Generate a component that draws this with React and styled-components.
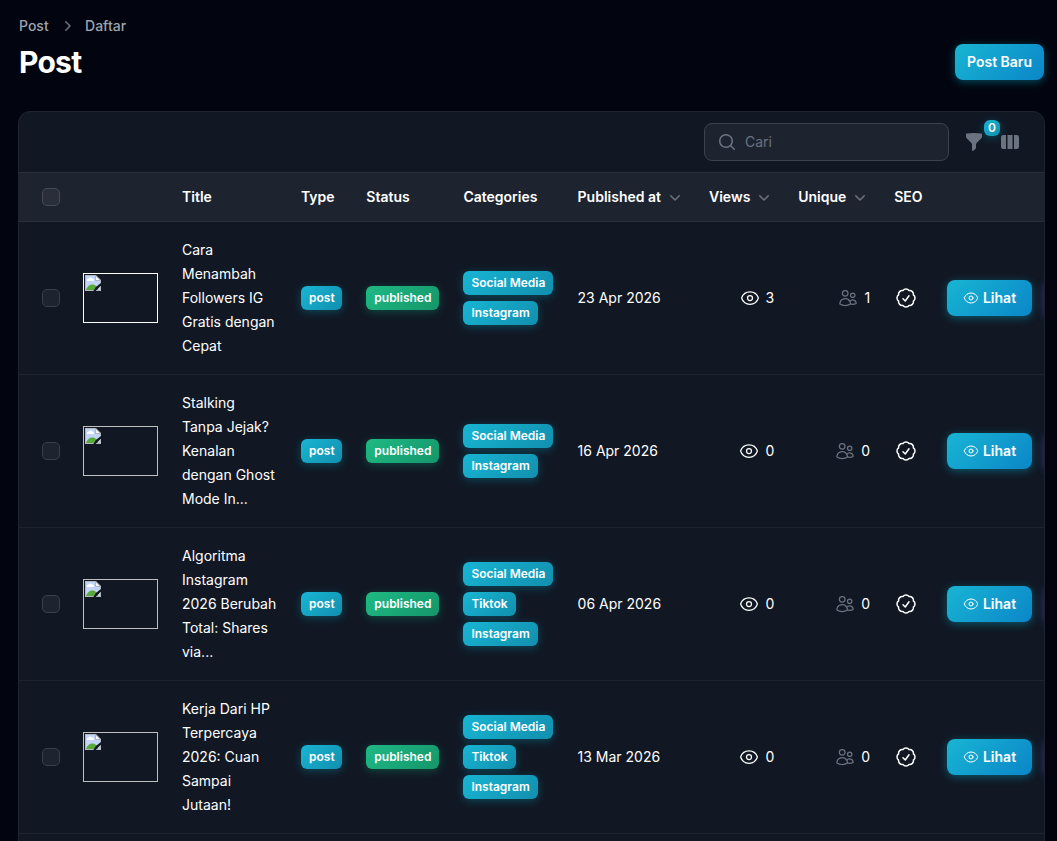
import React from "react";
import styled, { createGlobalStyle } from "styled-components";
import {
  HiMiniChevronDown,
  HiMiniChevronRight,
  HiMiniFunnel,
  HiMiniMagnifyingGlass,
  HiMiniViewColumns,
  HiOutlineCheckBadge,
  HiOutlineEye,
  HiOutlineUsers,
} from "react-icons/hi2";

const COLUMNS =
  "52px 99px 119px 65.3px 97.1px 114.2px 131.4px 89.25px 95.95px 52.8px 109px 100px";

const posts = [
  {
    title: "Cara Menambah Followers IG Gratis dengan Cepat",
    categories: ["Social Media", "Instagram"],
    date: "23 Apr 2026",
    views: 3,
    unique: 1,
    visited: true,
  },
  {
    title: "Stalking Tanpa Jejak? Kenalan dengan Ghost Mode In...",
    categories: ["Social Media", "Instagram"],
    date: "16 Apr 2026",
    views: 0,
    unique: 0,
  },
  {
    title: "Algoritma Instagram 2026 Berubah Total: Shares via...",
    categories: ["Social Media", "Tiktok", "Instagram"],
    date: "06 Apr 2026",
    views: 0,
    unique: 0,
  },
  {
    title: "Kerja Dari HP Terpercaya 2026: Cuan Sampai Jutaan!",
    categories: ["Social Media", "Tiktok", "Instagram"],
    date: "13 Mar 2026",
    views: 0,
    unique: 0,
  },
];

const MissingImage = () => (
  <svg width="16" height="16" viewBox="0 0 16 16">
    <path d="M0 0h11l5 5v11H0z" fill="#b4babf" />
    <path d="M1 1h9.5L15 5.5V15H1z" fill="#c3d5f6" />
    <path d="M2 6a1.5 1.5 0 0 1 1.3-2.2 2.2 2.2 0 0 1 4-.2A1.4 1.4 0 0 1 8.5 6z" fill="#fff" />
    <path d="M1 15c1-3.500 3.500-5.500 6.500-5.500 3 0 5 2.500 5.500 5.500z" fill="#58ab3a" />
    <path d="M10.500 0.500v5h5z" fill="#f6f7f7" stroke="#a9b0b5" strokeWidth="0.9" />
    <path d="M16 8v2.600L10.600 16H8.400l2.400-4z" fill="#111824" />
  </svg>
);

const App = () => {
  return (
    <>
      <GlobalStyle />
      <Page>
        <Header>
          <div>
            <Breadcrumbs>
              <span>Post</span>
              <HiMiniChevronRight size={20} />
              <span>Daftar</span>
            </Breadcrumbs>
            <Heading>Post</Heading>
          </div>
          <PrimaryButton>Post Baru</PrimaryButton>
        </Header>

        <Card>
          <Toolbar>
            <SearchBox>
              <HiMiniMagnifyingGlass size={20} />
              <SearchInput placeholder="Cari" />
            </SearchBox>
            <IconButton>
              <HiMiniFunnel size={20} />
              <Counter>0</Counter>
            </IconButton>
            <IconButton>
              <HiMiniViewColumns size={20} />
            </IconButton>
          </Toolbar>

          <HeadRow>
            <CheckCell>
              <Checkbox $head />
            </CheckCell>
            <Cell />
            <Cell>Title</Cell>
            <Cell>Type</Cell>
            <Cell>Status</Cell>
            <Cell>Categories</Cell>
            <SortCell>
              Published at <HiMiniChevronDown size={20} />
            </SortCell>
            <SortCell>
              Views <HiMiniChevronDown size={20} />
            </SortCell>
            <SortCell>
              Unique <HiMiniChevronDown size={20} />
            </SortCell>
            <Cell>SEO</Cell>
          </HeadRow>

          {posts.map((post) => (
            <Row key={post.title}>
              <CheckCell>
                <Checkbox />
              </CheckCell>
              <Cell>
                <Thumbnail $bright={post.visited}>
                  <MissingImage />
                </Thumbnail>
              </Cell>
              <Cell>
                <Title>{post.title}</Title>
              </Cell>
              <Cell>
                <Badge $width={41}>post</Badge>
              </Cell>
              <Cell>
                <Badge $success>published</Badge>
              </Cell>
              <Cell>
                <BadgeList>
                  {post.categories.map((category) => (
                    <Badge key={category}>{category}</Badge>
                  ))}
                </BadgeList>
              </Cell>
              <Cell>{post.date}</Cell>
              <CountCell>
                <HiOutlineEye size={20} />
                {post.views}
              </CountCell>
              <CountCell $muted>
                <HiOutlineUsers size={20} />
                {post.unique}
              </CountCell>
              <Cell>
                <HiOutlineCheckBadge size={24} />
              </Cell>
              <Cell>
                <ViewButton>
                  <HiOutlineEye size={16} />
                  Lihat
                </ViewButton>
              </Cell>
              <EditButton />
            </Row>
          ))}
        </Card>
      </Page>
    </>
  );
};

const GlobalStyle = createGlobalStyle`
  * {
    box-sizing: border-box;
  }

  body {
    margin: 0;
    overflow: hidden;
    background: #02050f;
    color: #fff;
    font-family: Inter, "Liberation Sans", sans-serif;
    font-size: 14px;
    line-height: 24px;
  }

  svg {
    flex-shrink: 0;
  }
`;

const Page = styled.main`
  height: 841px;
  overflow: hidden;
  padding: 16px 12px 0 18px;
`;

const Header = styled.header`
  display: flex;
  align-items: center;
  justify-content: space-between;
  height: 64px;
  padding: 0 1px;
  margin-bottom: 31px;
`;

const Breadcrumbs = styled.nav`
  display: flex;
  align-items: center;
  gap: 8.2px;
  height: 20px;
  font-weight: 500;
  color: #9ca3af;

  svg {
    color: #6b7280;
  }
`;

const Heading = styled.h1`
  margin: 8px 0 0;
  font-size: 30px;
  line-height: 36px;
  font-weight: 700;
  letter-spacing: -0.75px;
`;

const PrimaryButton = styled.button`
  height: 36px;
  margin-top: 28px;
  padding: 0 12px;
  border: 0;
  border-radius: 8px;
  background: linear-gradient(135deg, #18b5d3, #0b86c8);
  box-shadow: 0 2px 8px rgba(6, 182, 212, 0.4);
  color: #fff;
  font: 600 14px/20px Inter, sans-serif;
  white-space: nowrap;
`;

const ViewButton = styled(PrimaryButton)`
  display: flex;
  align-items: center;
  gap: 4px;
  width: 85px;
  margin: 0;
  padding: 0 16px;
`;

const EditButton = styled.div`
  align-self: center;
  width: 80px;
  height: 36px;
  border-radius: 8px;
  background: #6366f1;
  box-shadow: 0 2px 8px rgba(99, 102, 241, 0.4);
`;

const Card = styled.section`
  height: 800px;
  border: 1px solid #1d232f;
  border-radius: 12px;
  background: #111824;
  overflow: hidden;
`;

const Toolbar = styled.div`
  display: flex;
  align-items: center;
  justify-content: flex-end;
  gap: 16px;
  height: 60px;
  padding-right: 24px;
`;

const SearchBox = styled.label`
  display: flex;
  align-items: center;
  gap: 8px;
  width: 245px;
  height: 38px;
  margin-right: -1px;
  padding: 0 12px;
  border: 1px solid #3d434e;
  border-radius: 8px;
  background: #1d2430;
  color: #6b7280;
`;

const SearchInput = styled.input`
  width: 100%;
  padding: 0;
  border: 0;
  outline: 0;
  background: transparent;
  color: #fff;
  font: 14px/24px Inter, sans-serif;

  &::placeholder {
    color: #6b7280;
  }
`;

const IconButton = styled.button`
  position: relative;
  display: flex;
  width: 20px;
  height: 20px;
  padding: 0;
  border: 0;
  background: none;
  color: #6b7280;
`;

const Counter = styled.span`
  position: absolute;
  top: -12px;
  left: 20px;
  width: 16px;
  height: 16px;
  border-radius: 6px;
  background: linear-gradient(135deg, #18b5d3, #128fae);
  box-shadow: 0 2px 8px rgba(6, 182, 212, 0.3);
  color: #fff;
  font: 600 12px/16px Inter, sans-serif;
  text-align: center;
`;

const Row = styled.div`
  display: grid;
  grid-template-columns: ${COLUMNS};
  height: 153px;
  border-bottom: 1px solid #1d2430;
`;

const HeadRow = styled(Row)`
  height: 50px;
  border-top: 1px solid #292f3a;
  border-bottom-color: #292f3a;
  background: #1d2430;
  font-weight: 600;
`;

const Cell = styled.div`
  display: flex;
  align-items: center;
  min-width: 0;
  padding: 0 12px;
  white-space: nowrap;
`;

const CheckCell = styled(Cell)`
  padding-left: 23px;
`;

const SortCell = styled(Cell)`
  gap: 4px;

  svg {
    color: #6b7280;
  }
`;

const CountCell = styled(Cell)`
  justify-content: flex-end;
  gap: 6px;

  svg {
    color: ${(props) => (props.$muted ? "#6b7280" : "#fff")};
  }
`;

const Checkbox = styled.span`
  width: 18px;
  height: 18px;
  flex-shrink: 0;
  border: 1px solid ${(props) => (props.$head ? "#454a55" : "#3a404b")};
  border-radius: 5px;
  background: ${(props) => (props.$head ? "#292e3a" : "#1d2430")};
`;

const Thumbnail = styled.div`
  width: 75px;
  height: 50px;
  padding: 1px;
  border: 1px solid ${(props) => (props.$bright ? "#fff" : "#c0c0c0")};
  line-height: 0;
`;

const Title = styled.div`
  width: 96px;
  white-space: normal;
`;

const BadgeList = styled.div`
  display: flex;
  flex-direction: column;
  align-items: flex-start;
  gap: 6px;
`;

const Badge = styled.span`
  width: ${(props) => (props.$width ? `${props.$width}px` : "auto")};
  height: 24px;
  padding: 0 8px;
  border-radius: 6px;
  background: ${(props) =>
    props.$success
      ? "linear-gradient(135deg, #1fb984, #15966a)"
      : "linear-gradient(135deg, #18b5d3, #128fae)"};
  box-shadow: 0 2px 8px
    ${(props) =>
      props.$success ? "rgba(16, 185, 129, 0.3)" : "rgba(6, 182, 212, 0.3)"};
  font-size: 12px;
  font-weight: 600;
  line-height: 24px;
`;

export default App;
